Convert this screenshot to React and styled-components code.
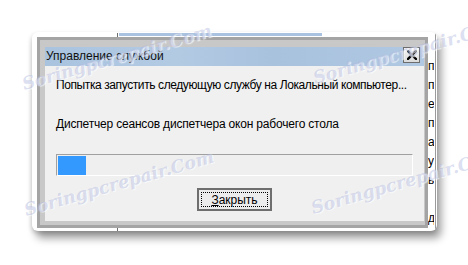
import React from 'react';
import styled, { createGlobalStyle } from 'styled-components';

const GlobalStyle = createGlobalStyle`
  html, body {
    margin: 0;
    padding: 0;
    background: #ffffff;
  }
  body {
    width: 468px;
    height: 265px;
    overflow: hidden;
    font-family: "Liberation Sans", Arial, sans-serif;
  }
`;

const Stage = styled.div`
  position: relative;
  width: 468px;
  height: 265px;
  padding: 32px 0 0 32px;
  box-sizing: border-box;
  overflow: hidden;
`;

const Shot = styled.div`
  position: relative;
  width: 405px;
  height: 199px;
  padding: 5px 0 0 5px;
  box-sizing: border-box;
  background: #ffffff;
  border-radius: 6px;
  overflow: hidden;
  box-shadow: 4px 7px 9px rgba(0, 0, 0, 0.4), -1px 2px 4px rgba(0, 0, 0, 0.14);
`;

// window lying behind the dialog on the desktop
const BackWindow = styled.div`
  position: absolute;
  left: 85px;
  top: 1px;
  width: 319px;
  height: 260px;
  box-sizing: border-box;
  border-left: 1px solid #6f6f6f;
  border-right: 1px solid #9a9a9a;
`;

const BackTitle = styled.div`
  margin-left: 1px;
  width: 203px;
  height: 3px;
  background: #a9c2df;
`;

const BackList = styled.div`
  position: absolute;
  right: 1px;
  top: 24px;
  width: 6px;
  overflow: hidden;
  font-size: 12px;
  line-height: 19px;
  color: #000;
  white-space: nowrap;
`;

const Dialog = styled.div`
  position: relative;
  z-index: 1;
  width: 391px;
  height: 191px;
  box-sizing: border-box;
  border: 3px solid #a4a4a4;
  background: #c8c8c8;
  padding: 7px 1px 4px 5px;
  display: flex;
  flex-direction: column;
`;

const TitleBar = styled.div`
  height: 19px;
  flex: none;
  display: flex;
  align-items: flex-start;
  justify-content: space-between;
  background: linear-gradient(90deg, #a9c3df 0%, #b3cae3 35%, #a8c1dd 60%, #b0c8e2 100%);
`;

const TitleText = styled.span`
  padding-left: 1px;
  font-size: 12px;
  line-height: 19px;
  color: #111;
`;

const CloseButton = styled.div`
  margin-right: 4px;
  width: 17px;
  height: 16px;
  box-sizing: border-box;
  border: 1px solid #6d6d6d;
  background: linear-gradient(#f6f6f6, #dadada);
  display: flex;
  align-items: center;
  justify-content: center;
`;

const Body = styled.div`
  flex: 1;
  background: #f0f0f0;
  padding: 11px 11px 0 11px;
  display: flex;
  flex-direction: column;
`;

const Line = styled.div`
  font-size: 12px;
  line-height: 15px;
  color: #000;
  margin-top: ${({ gap }) => gap}px;
  letter-spacing: ${({ tracking }) => tracking}px;
  white-space: nowrap;
`;

const Progress = styled.div`
  margin-top: 22px;
  height: 22px;
  box-sizing: border-box;
  border: 1px solid;
  border-color: #a0a0a0 #ffffff #ffffff #a0a0a0;
  background: #efefef;
  padding: 1px;
`;

const Chunk = styled.div`
  height: 19px;
  background: #3399ff;
`;

const Button = styled.div`
  margin: 12px auto 0;
  width: 75px;
  height: 23px;
  box-sizing: border-box;
  border: 2px solid #6e6e6e;
  background: #ececec;
  padding: 2px;
`;

const Focus = styled.div`
  height: 100%;
  box-sizing: border-box;
  border: 1px dotted #000;
  display: flex;
  align-items: center;
  justify-content: center;
  font-size: 12px;
  color: #000;
`;

const Mnemonic = styled.span`
  text-decoration: underline;
`;

const Watermark = styled.span`
  position: absolute;
  z-index: 5;
  left: ${({ x }) => x}px;
  top: ${({ y }) => y}px;
  transform-origin: 0 100%;
  transform: rotate(-16deg);
  font-family: "DejaVu Serif", "Liberation Serif", serif;
  font-style: italic;
  font-weight: bold;
  font-size: 17.5px;
  line-height: 18px;
  white-space: nowrap;
  color: rgba(170, 180, 220, 0.42);
  text-shadow: 1px 1px 1px rgba(255, 255, 255, 0.7);
  pointer-events: none;
`;

const listRows = ['п', 'п', 'е', 'п', 'а', 'у', 'ь', '', 'д'];
const progress = 8;
const marks = [
  [25, 75],
  [27, 201],
  [316, 69],
  [314, 199],
];

export default function App() {
  return (
    <Stage>
      <GlobalStyle />
      <Shot>
        <BackWindow>
          <BackTitle />
          <BackList>
            {listRows.map((r, i) => (
              <div key={i}>{r || '\u00a0'}</div>
            ))}
          </BackList>
        </BackWindow>
        <Dialog>
          <TitleBar>
            <TitleText>Управление службой</TitleText>
            <CloseButton>
              <svg width="10" height="10" viewBox="0 0 10 10">
                <path d="M1 1 L9 9 M9 1 L1 9" stroke="#000" strokeWidth="2.3" strokeLinecap="square" />
              </svg>
            </CloseButton>
          </TitleBar>
          <Body>
            <Line gap={1} tracking={-0.4}>Попытка запустить следующую службу на Локальный компьютер...</Line>
            <Line gap={24} tracking={-0.19}>Диспетчер сеансов диспетчера окон рабочего стола</Line>
            <Progress>
              <Chunk style={{ width: `${progress}%` }} />
            </Progress>
            <Button>
              <Focus>
                <Mnemonic>З</Mnemonic>акрыть
              </Focus>
            </Button>
          </Body>
        </Dialog>
      </Shot>
      {marks.map(([x, y], i) => (
        <Watermark key={i} x={x} y={y}>Soringpcrepair.Com</Watermark>
      ))}
    </Stage>
  );
}
